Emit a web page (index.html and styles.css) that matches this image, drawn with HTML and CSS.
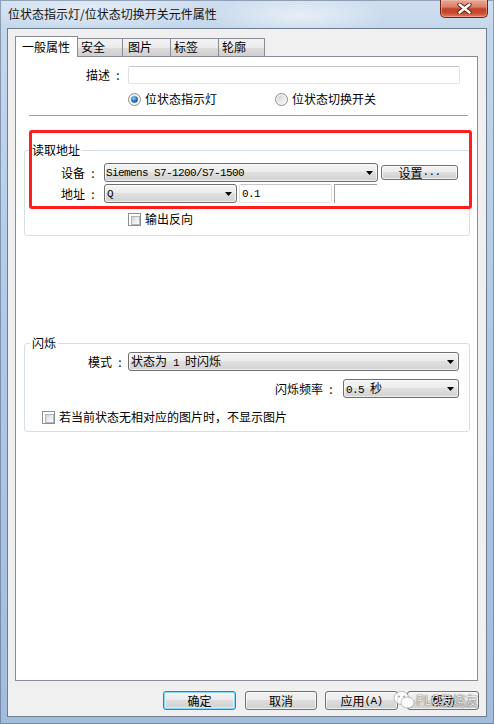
FILE: index.html
```html
<!DOCTYPE html>
<html lang="zh-CN">
<head>
<meta charset="utf-8">
<title>位状态指示灯/位状态切换开关元件属性</title>
<link rel="stylesheet" href="styles.css">
</head>
<body>
<div class="window">
  <div class="titlebar">
    <span class="title">位状态指示灯/位状态切换开关元件属性</span>
    <div class="close" aria-label="关闭">
      <svg width="15" height="11" viewBox="0 0 15 11">
        <path d="M2.5 1.5 L12.5 9.5 M12.5 1.5 L2.5 9.5" stroke="#5a1a10" stroke-width="4.2" stroke-linecap="round"/>
        <path d="M2.5 1.5 L12.5 9.5 M12.5 1.5 L2.5 9.5" stroke="#ffffff" stroke-width="2.4" stroke-linecap="round"/>
      </svg>
    </div>
  </div>

  <div class="client">
    <div class="tabs">
      <div class="tab active">一般属性</div>
      <div class="tab w45">安全</div>
      <div class="tab w48 pad5">图片</div>
      <div class="tab w48">标签</div>
      <div class="tab w46">轮廓</div>
    </div>

    <div class="panel">
      <div class="row desc-row">
        <div class="lbl desc-lbl">描述<span class="colon">:</span></div>
        <div class="textbox desc-input"></div>
      </div>

      <div class="row radio-row">
        <div class="opt first">
          <svg class="radio" width="13" height="13" viewBox="0 0 13 13">
            <defs>
              <linearGradient id="rgA" x1="0" y1="0" x2="1" y2="1">
                <stop offset="0" stop-color="#cfd2d6"/><stop offset="1" stop-color="#fafafa"/>
              </linearGradient>
              <radialGradient id="dot" cx="0.4" cy="0.35" r="0.75">
                <stop offset="0" stop-color="#9fdcff"/><stop offset="0.45" stop-color="#2a82d2"/><stop offset="1" stop-color="#0b3d78"/>
              </radialGradient>
            </defs>
            <circle cx="6.5" cy="6.5" r="6" fill="#f3f3f3" stroke="#8c8e91"/>
            <circle cx="6.5" cy="6.5" r="4.2" fill="url(#rgA)"/>
            <circle cx="6.5" cy="6.5" r="3.3" fill="url(#dot)"/>
          </svg>
          <span>位状态指示灯</span>
        </div>
        <div class="opt">
          <svg class="radio" width="13" height="13" viewBox="0 0 13 13">
            <defs>
              <linearGradient id="rgB" x1="0" y1="0" x2="1" y2="1">
                <stop offset="0" stop-color="#cfd2d6"/><stop offset="1" stop-color="#fafafa"/>
              </linearGradient>
            </defs>
            <circle cx="6.5" cy="6.5" r="6" fill="#f3f3f3" stroke="#8c8e91"/>
            <circle cx="6.5" cy="6.5" r="4.2" fill="url(#rgB)"/>
          </svg>
          <span>位状态切换开关</span>
        </div>
      </div>

      <div class="separator"></div>

      <div class="group read-group">
        <div class="group-title">读取地址</div>
        <div class="row field-row">
          <div class="lbl dev-lbl">设备<span class="colon">:</span></div>
          <div class="combo dev-combo">
            <span class="mono">Siemens S7-1200/S7-1500</span>
            <svg class="arrow" width="7" height="4" viewBox="0 0 7 4"><path d="M0 0 H7 L3.5 4 Z" fill="#000"/></svg>
          </div>
          <div class="btn small-btn">设置<span class="mono">...</span></div>
        </div>
        <div class="row field-row addr-row">
          <div class="lbl dev-lbl">地址<span class="colon">:</span></div>
          <div class="combo addr-combo">
            <span class="mono">Q</span>
            <svg class="arrow" width="7" height="4" viewBox="0 0 7 4"><path d="M0 0 H7 L3.5 4 Z" fill="#000"/></svg>
          </div>
          <div class="textbox addr-input"><span class="mono">0.1</span></div>
          <div class="static-box"></div>
        </div>
        <div class="row check-row invert-row">
          <span class="check"></span>
          <span>输出反向</span>
        </div>
      </div>

      <div class="group blink-group">
        <div class="group-title">闪烁</div>
        <div class="row field-row">
          <div class="lbl mode-lbl">模式<span class="colon">:</span></div>
          <div class="combo mode-combo">
            <span>状态为<span class="mono"> 1 </span>时闪烁</span>
            <svg class="arrow" width="7" height="4" viewBox="0 0 7 4"><path d="M0 0 H7 L3.5 4 Z" fill="#000"/></svg>
          </div>
        </div>
        <div class="row field-row freq-row">
          <div class="lbl freq-lbl">闪烁频率<span class="colon">:</span></div>
          <div class="combo freq-combo">
            <span><span class="mono">0.5 </span>秒</span>
            <svg class="arrow" width="7" height="4" viewBox="0 0 7 4"><path d="M0 0 H7 L3.5 4 Z" fill="#000"/></svg>
          </div>
        </div>
        <div class="row check-row hide-row">
          <span class="check"></span>
          <span>若当前状态无相对应的图片时，不显示图片</span>
        </div>
      </div>

      <div class="highlight"></div>
    </div>

    <div class="actions">
      <div class="btn default w73">确定</div>
      <div class="btn w72 gap9">取消</div>
      <div class="btn w73 gap8">应用<span class="mono">(A)</span></div>
      <div class="btn w72 gap9">帮助</div>
    </div>
  </div>

  <div class="watermark">
    <svg width="22" height="20" viewBox="0 0 22 20">
      <ellipse cx="8.5" cy="8" rx="7.5" ry="6.5" fill="rgba(255,255,255,0.85)" stroke="rgba(110,110,110,0.55)" stroke-width="0.8"/>
      <ellipse cx="14.5" cy="12.5" rx="6.5" ry="5.5" fill="rgba(255,255,255,0.92)" stroke="rgba(110,110,110,0.55)" stroke-width="0.8"/>
      <circle cx="6" cy="6.5" r="1" fill="rgba(130,130,130,0.75)"/>
      <circle cx="11" cy="6.5" r="1" fill="rgba(130,130,130,0.75)"/>
    </svg>
    <span class="wm-text">PLC发烧友</span>
  </div>
</div>
</body>
</html>
```

FILE: styles.css
```css
* {
  box-sizing: border-box;
}

html,
body {
  margin: 0;
  padding: 0;
}

body {
  width: 494px;
  height: 724px;
  overflow: hidden;
  font-family: "Noto Sans CJK SC", "Liberation Sans", sans-serif;
  font-size: 12px;
  line-height: 14px;
  color: #000;
}

.mono {
  font-family: "Liberation Mono", "DejaVu Sans Mono", monospace;
  font-size: 11px;
  letter-spacing: -0.6px;
  white-space: pre;
}

/* Aero glass frame */
.window {
  position: relative;
  width: 494px;
  height: 724px;
  display: flex;
  flex-direction: column;
  background:
    radial-gradient(ellipse 90px 20px at 300px 16px, rgba(255, 255, 255, 0.55), rgba(255, 255, 255, 0) 100%),
    radial-gradient(ellipse 120px 22px at 90px 10px, rgba(255, 255, 255, 0.45), rgba(255, 255, 255, 0) 100%),
    linear-gradient(180deg, #d0dfef 0px, #c4d7ec 28px, #b3cae6 300px, #a3bcdc 724px);
  box-shadow: inset 0 0 0 1px rgba(60, 80, 110, 0.45);
}

.titlebar {
  height: 28px;
  display: flex;
  align-items: center;
  padding-left: 8px;
}

.title {
  font-size: 12px;
  line-height: 14px;
  color: #111;
}

.close {
  margin-left: auto;
  margin-right: 6px;
  align-self: flex-start;
  width: 48px;
  height: 18px;
  border: 1px solid #6a2517;
  border-top: none;
  border-radius: 0 0 5px 5px;
  background: linear-gradient(180deg, #e7a999 0%, #d9806a 40%, #c24428 52%, #c74a2e 75%, #de7c5e 100%);
  box-shadow: inset 0 0 0 1px rgba(255, 200, 180, 0.45);
  display: flex;
  align-items: center;
  justify-content: center;
}

/* dialog client area */
.client {
  flex: 1;
  margin: 0 7px 7px 7px;
  background: #f0f0f0;
  border: 1px solid #6f7d8e;
  padding: 7px 7px 0 7px;
  display: flex;
  flex-direction: column;
}

.tabs {
  height: 20px;
  display: flex;
  align-items: flex-end;
  position: relative;
  z-index: 1;
}

.tab {
  height: 18px;
  border: 1px solid #898c95;
  border-left: none;
  border-bottom: none;
  padding-left: 3px;
  line-height: 16px;
  background: linear-gradient(180deg, #f3f3f3 0%, #ebebeb 50%, #dddddd 50%, #cfcfcf 100%);
}

.tab.active {
  width: 63px;
  height: 21px;
  margin-bottom: -1px;
  border-left: 1px solid #898c95;
  padding-left: 6px;
  line-height: 19px;
  background: #fff;
}

.w45 { width: 45px; }
.w46 { width: 46px; }
.w48 { width: 48px; }
.pad5 { padding-left: 5px; }

.panel {
  flex: 1;
  position: relative;
  margin-right: 1px;
  background: #fff;
  border: 1px solid #898c95;
  display: flex;
  flex-direction: column;
}

.row {
  display: flex;
  align-items: center;
}

.lbl {
  display: flex;
  justify-content: flex-end;
  align-items: center;
  flex: none;
}

.colon {
  margin-left: 6px;
  width: 4px;
  text-align: center;
}

.textbox {
  height: 18px;
  background: #fff;
  border: 1px solid;
  border-color: #c4c8ce #dfe3e8 #e3e7eb #dfe3e8;
  border-radius: 2px;
  flex: none;
}

.desc-row {
  margin-top: 9px;
  height: 18px;
}

.desc-lbl {
  width: 104px;
  margin-right: 8px;
}

.desc-input {
  width: 332px;
}

.radio-row {
  margin-top: 8px;
  height: 14px;
  padding-left: 112px;
}

.opt {
  display: flex;
  align-items: center;
  gap: 4px;
}

.opt.first {
  width: 147px;
}

.radio {
  flex: none;
}

.separator {
  height: 1px;
  margin: 9px 9px 0 13px;
  background: #a0a0a0;
}

/* group boxes */
.group {
  position: relative;
  border: 1px solid #d5dfe5;
  border-radius: 3px;
  margin: 0 7px 0 8px;
  padding-right: 10px;
}

.group-title {
  position: absolute;
  left: 5px;
  top: -8px;
  padding: 0 2px;
  background: #fff;
  line-height: 14px;
}

.read-group {
  margin-top: 34px;
  padding-top: 12px;
  padding-bottom: 9px;
}

.blink-group {
  margin-top: 107px;
  padding-top: 8px;
  padding-bottom: 7px;
}

.field-row {
  height: 19px;
}

.addr-row {
  margin-top: 2px;
}

.dev-lbl {
  width: 70px;
  margin-right: 9px;
}

.combo {
  position: relative;
  height: 19px;
  flex: none;
  display: flex;
  align-items: center;
  padding-left: 2px;
  border: 1px solid #707070;
  border-radius: 3px;
  background: linear-gradient(180deg, #f4f4f4 0%, #ececec 50%, #dfdfdf 50%, #d3d3d3 100%);
  box-shadow: inset 0 0 0 1px rgba(255, 255, 255, 0.6);
}

.combo .arrow {
  margin-left: auto;
  margin-right: 4px;
  flex: none;
}

.dev-combo { width: 274px; padding-left: 1px; }
.addr-combo { width: 133px; padding-left: 2px; }

.addr-input {
  width: 93px;
  height: 19px;
  margin-left: 2px;
  padding-left: 2px;
  display: flex;
  align-items: center;
}

.static-box {
  width: 43px;
  height: 19px;
  margin-left: 2px;
  border-top: 1px solid #a0a0a0;
  border-left: 1px solid #a0a0a0;
}

.btn {
  height: 19px;
  flex: none;
  display: flex;
  align-items: center;
  justify-content: center;
  border: 1px solid #707070;
  border-radius: 3px;
  background: linear-gradient(180deg, #f2f2f2 0%, #ebebeb 50%, #dddddd 50%, #cfcfcf 100%);
  box-shadow: inset 0 0 0 1px rgba(255, 255, 255, 0.7);
}

.small-btn {
  width: 77px;
  height: 15px;
  margin-left: 3px;
  line-height: 13px;
}

.check-row {
  height: 14px;
  gap: 4px;
}

.invert-row {
  margin-top: 9px;
  padding-left: 103px;
}

.hide-row {
  margin-top: 12px;
  padding-left: 17px;
}

.check {
  width: 13px;
  height: 13px;
  flex: none;
  border: 1px solid #8e8f8f;
  background: #fff;
  padding: 2px;
}

.check::before {
  content: "";
  display: block;
  width: 100%;
  height: 100%;
  border: 1px solid #b0b5bb;
  background: linear-gradient(135deg, #cfd3d8 0%, #eef0f2 60%, #fbfbfb 100%);
}

.mode-lbl {
  width: 97px;
  margin-right: 6px;
}

.mode-combo {
  width: 331px;
  padding-left: 2px;
}

.freq-row {
  margin-top: 8px;
  justify-content: flex-end;
}

.freq-lbl {
  margin-right: 10px;
}

.freq-combo {
  width: 116px;
  padding-left: 2px;
}

/* red callout frame around the address section */
.highlight {
  position: absolute;
  left: 13px;
  top: 73px;
  width: 443px;
  height: 79px;
  border: 3px solid #ff1e1e;
  border-radius: 3px;
  pointer-events: none;
}

.actions {
  height: 35px;
  padding-top: 10px;
  padding-bottom: 6px;
  display: flex;
  justify-content: flex-end;
}

.actions .btn {
  height: 19px;
}

.w72 { width: 72px; }
.w73 { width: 73px; }
.gap8 { margin-left: 8px; }
.gap9 { margin-left: 9px; }

.btn.default {
  border-color: #3c7fb1;
  box-shadow: inset 0 0 0 1px #8ad4f8, inset 0 0 0 2px rgba(255, 255, 255, 0.5);
}

/* translucent account mark in the lower right corner */
.watermark {
  position: absolute;
  left: 393px;
  top: 690px;
  display: flex;
  align-items: center;
  gap: 1px;
  pointer-events: none;
}

.wm-text {
  font-size: 13px;
  line-height: 16px;
  color: rgba(255, 255, 255, 0.88);
  text-shadow: 0 0 1px rgba(0, 0, 0, 0.7), 0 0 2px rgba(0, 0, 0, 0.35);
}
```
